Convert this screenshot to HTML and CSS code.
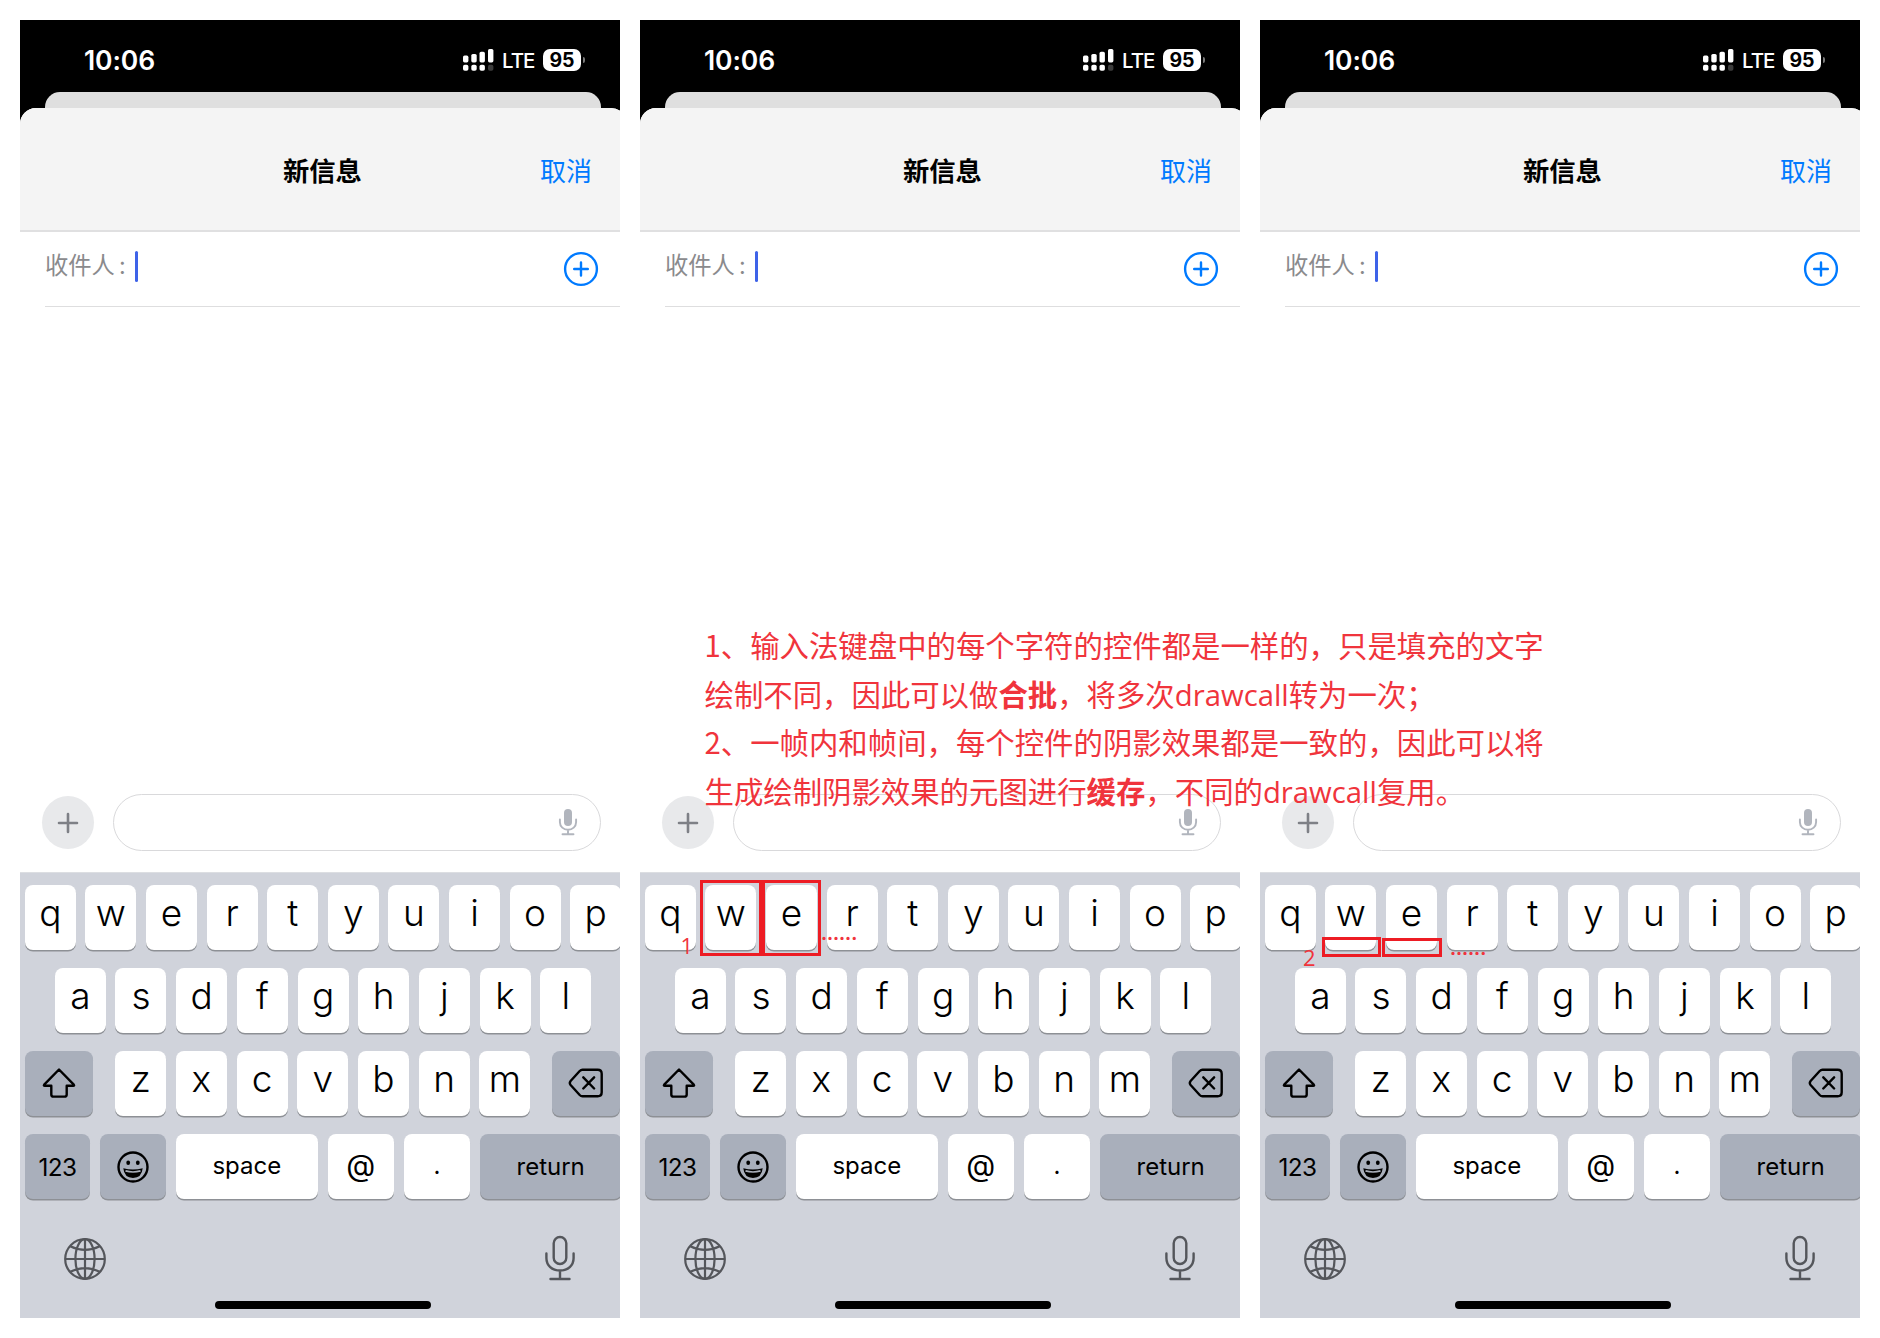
FILE: index.html
```html
<!DOCTYPE html>
<html lang="zh-CN">
<head>
<meta charset="utf-8">
<title>新信息</title>
<link rel="stylesheet" href="styles.css">
</head>
<body>
<main class="board" id="board"></main>

<div class="note">
  <p>1、输入法键盘中的每个字符的控件都是一样的，只是填充的文字</p>
  <p>绘制不同，因此可以做<b>合批</b>，将多次<span class="latin">drawcall</span>转为一次；</p>
  <p>2、一帧内和帧间，每个控件的阴影效果都是一致的，因此可以将</p>
  <p>生成绘制阴影效果的元图进行<b>缓存</b>，不同的<span class="latin">drawcall</span>复用。</p>
</div>
<div class="mark mark-w"></div>
<div class="mark mark-e"></div>
<div class="mark mark-w-shadow"></div>
<div class="mark mark-e-shadow"></div>
<span class="num num-1">1</span>
<span class="num num-2">2</span>
<span class="dots dots-1">······</span>
<span class="dots dots-2">······</span>

<template id="phone">
  <section class="phone">
    <div class="status">
      <span class="time">10:06</span>
      <svg class="signal" width="31" height="22" viewBox="0 0 31 22" fill="#fff">
        <rect x="0" y="6.6" width="5.4" height="6.8" rx="1.6"/><rect x="8.3" y="5" width="5.4" height="8.4" rx="1.6"/><rect x="16.5" y="2.8" width="5.4" height="10.6" rx="1.6"/><rect x="25" y="0" width="5.4" height="13.4" rx="1.6"/>
        <rect x="0" y="15.7" width="5.4" height="6" rx="1.8"/><rect x="8.3" y="15.7" width="5.4" height="6" rx="1.8"/><rect x="16.5" y="15.7" width="5.4" height="6" rx="1.8"/><rect x="25" y="15.7" width="5.4" height="6" rx="1.8" fill="#3c3c3c"/>
      </svg>
      <span class="net">LTE</span>
      <span class="battery">95</span>
      <span class="nub"></span>
    </div>
    <div class="back-sheet"></div>
    <div class="sheet">
      <header class="head"><h1>新信息</h1><a class="cancel">取消</a></header>
      <div class="to">
        <span class="label">收件人<i>:</i></span><span class="caret"></span>
        <svg class="add" width="36" height="36" viewBox="0 0 36 36" fill="none" stroke="#007aff" stroke-width="2.4" stroke-linecap="round"><circle cx="18" cy="18" r="15.9"/><path d="M18 11.4v13.2M11.2 18h13.6"/></svg>
      </div>
      <div class="body"></div>
      <div class="compose">
        <span class="plus"><svg width="22" height="22" viewBox="0 0 22 22" fill="none" stroke="#7e8086" stroke-width="2.6" stroke-linecap="round"><path d="M11 2v18M2 11h18"/></svg></span>
        <div class="field"><svg width="20" height="28" viewBox="0 0 20 28" fill="none" stroke="#b1b5bd" stroke-width="1.9" stroke-linecap="round"><rect x="6" y="1" width="8" height="17" rx="4" fill="#b1b5bd" stroke="none"/><path d="M1.9 11.5v2.8a8.1 7.5 0 0 0 16.2 0v-2.8M10 22v4M4.5 26.2h11"/></svg></div>
      </div>
    </div>
    <div class="keyboard">
      <div class="row r1"></div>
      <div class="row r2"></div>
      <div class="row r3">
        <span class="key dark shift"><svg width="34" height="32" viewBox="0 0 34 32" fill="none" stroke="#000" stroke-width="2.4" stroke-linejoin="round"><path d="M17 2.5 2.2 17.6q-.9 1.2.6 1.2h6.5v8.6q0 2.2 2.2 2.2h11q2.2 0 2.2-2.2v-8.6h6.5q1.5 0 .6-1.2z"/></svg></span>
        <span class="letters"></span>
        <span class="key dark del"><svg width="36" height="30" viewBox="0 0 36 30" fill="none" stroke="#000" stroke-width="2.4" stroke-linecap="round" stroke-linejoin="round"><path d="M14.5 1.8h15.2q4 0 4 4v18.4q0 4-4 4H14.5q-1.6 0-2.8-1.2L2.6 17q-1.600-2 0-4l9.100-10q1.200-1.200 2.800-1.200zM15.300 9.300l10.800 11.200M26.100 9.300 15.300 20.500"/></svg></span>
      </div>
      <div class="row r4">
        <span class="key dark k123">123</span>
        <span class="key dark kemoji"><svg width="34" height="34" viewBox="0 0 34 34" fill="none" stroke="#000" stroke-width="2.4"><circle cx="17" cy="17" r="14.500"/><ellipse cx="12.200" cy="12.800" rx="1.900" ry="2.300" fill="#000" stroke="none"/><ellipse cx="21.800" cy="12.800" rx="1.900" ry="2.300" fill="#000" stroke="none"/><path d="M7.300 18.300q9.700 2.400 19.400 0-1 9.700-9.700 9.700T7.300 18.300z" fill="#000" stroke="none"/><path d="M9.500 20.900q7.500 2.200 15 0" stroke="#a9afbb" stroke-width="1.700"/></svg></span>
        <span class="key kspace">space</span>
        <span class="key kat">@</span>
        <span class="key kdot">.</span>
        <span class="key dark kreturn">return</span>
      </div>
      <div class="tools">
        <svg width="44" height="44" viewBox="0 0 44 44" fill="none" stroke="#54565b" stroke-width="2.200"><circle cx="22" cy="22" r="19.800"/><ellipse cx="22" cy="22" rx="9.600" ry="19.800"/><path d="M22 2.200v39.600M2.200 22h39.600M7.300 9.200q14.700 7.400 29.400 0M7.300 34.800q14.700-7.400 29.400 0"/></svg>
        <svg width="32" height="46" viewBox="0 0 32 46" fill="none" stroke="#54565b" stroke-width="2.400" stroke-linecap="round"><rect x="9.700" y="2" width="12.600" height="27" rx="6.300"/><path d="M2.400 18.500v4.500c0 7.500 5.600 12.500 13.600 12.500s13.600-5 13.600-12.500v-4.500M16 35.500V43.500M6.500 44h19"/></svg>
      </div>
      <div class="home"></div>
    </div>
  </section>
</template>
<script src="app.js"></script>
</body>
</html>
```

FILE: styles.css
```css
* { box-sizing: border-box; }
body { margin: 0; width: 1880px; height: 1338px; overflow: hidden; background: #fff; position: relative; font-family: Inter, "Noto Sans CJK SC", sans-serif; color: #000; }
.board { display: flex; gap: 20px; padding: 20px; }
.phone { width: 600px; height: 1298px; flex: none; overflow: hidden; background: #000; display: flex; flex-direction: column; }
svg { display: block; flex: none; }

.status { height: 72px; flex: none; display: flex; align-items: flex-start; color: #fff; padding: 0 0 0 64px; }
.time { font-size: 26.500px; font-weight: 600; line-height: 32px; margin-top: 24px; width: 379px; letter-spacing: -0.100px; }
.signal { margin-top: 29px; }
.net { margin: 27px 0 0 8px; width: 41px; font-size: 20.500px; font-weight: 500; line-height: 27px; letter-spacing: -1px; }
.battery { margin-top: 29px; width: 38px; height: 22px; border-radius: 7px; background: #fff; color: #000; font-size: 19.500px; line-height: 23px; font-weight: 700; text-align: center; }
.nub { margin: 37px 0 0 2px; width: 2px; height: 6px; background: #777; border-radius: 0 2px 2px 0; }
.back-sheet { height: 16px; flex: none; margin: 0 19px 0 25px; background: #dfdfdf; border-radius: 15px 15px 0 0; }
.sheet { width: 607px; height: 764px; flex: none; background: #fff; border-radius: 16px 16px 0 0; overflow: hidden; display: flex; flex-direction: column; }
.head { height: 124px; flex: none; width: 607px; background: #f4f4f4; border-bottom: 2px solid #e0e0e1; display: grid; grid-template-columns: 263px 257px 1fr; padding-top: 44px; }
.head::before { content: ""; }
.head h1 { margin: 0; font-size: 26.300px; line-height: 40px; font-weight: 700; white-space: nowrap; }
.cancel { color: #007aff; font-size: 26px; line-height: 40px; }
.to { height: 75px; flex: none; margin-left: 25px; border-bottom: 1px solid #dededf; display: flex; }
.label { width: 90px; color: #8a8a8d; font-size: 23.300px; line-height: 34px; margin-top: 17px; white-space: nowrap; }
.label i { font-style: normal; margin-left: 4px; }
.caret { width: 3px; height: 31px; margin-top: 19px; border-radius: 1.500px; background: #3e63e8; }
.add { margin: 19px 0 0 425px; }
.body { flex: 1; }
.compose { height: 79px; flex: none; display: flex; padding-left: 22px; }
.plus { width: 52px; height: 53px; margin-top: 3px; border-radius: 50%; background: #e8e9eb; display: grid; place-items: center; }
.field { width: 488px; height: 57px; margin: 1px 0 0 19px; border: 1.500px solid #d9d9db; border-radius: 28.500px; display: flex; align-items: center; justify-content: flex-end; padding: 0 22px 1px 0; }

.keyboard { width: 607px; flex: 1; background: #d0d3db; border-top: 1px solid #dcdee2; padding: 12px 0 0 4.800px; display: flex; flex-direction: column; gap: 18.600px; }
.row, .letters { display: flex; gap: 9.600px; height: 64.500px; flex: none; }
.r2 { padding-left: 30px; }
.r2, .letters { gap: 9.700px; }
.r3 { gap: 22px; }
.r4 { gap: 9.800px; }
.key { width: 51px; height: 64.500px; flex: none; background: #fff; border-radius: 8px; box-shadow: 0 1.500px 0 #8d9095; display: flex; align-items: center; justify-content: center; font-size: 37px; font-weight: 350; padding-bottom: 9px; }
.dark { background: #a9afbb; padding-bottom: 0; }
.shift { width: 68.400px; }
.del { width: 68px; }
.k123 { width: 65.400px; font-size: 24.300px; font-weight: 400; letter-spacing: -0.500px; }
.kemoji { width: 66px; }
.kspace { width: 142px; font-size: 24px; font-weight: 400; padding-bottom: 3px; }
.kat { width: 66.500px; font-size: 30px; font-weight: 400; padding-bottom: 4px; }
.kdot { width: 66px; font-size: 24px; font-weight: 400; padding-bottom: 3px; }
.kreturn { width: 142px; font-size: 24px; font-weight: 400; }
.tools { display: flex; justify-content: space-between; padding: 20px 51px 0 38.500px; height: 66px; flex: none; }
.tools svg:last-child { margin-top: -2px; }
.home { width: 216px; height: 8px; border-radius: 4px; background: #000; margin: -0.600px 0 0 190px; flex: none; }

/* Annotations drawn across the phones */
.note { position: absolute; left: 704.500px; top: 620px; color: #f0343c; font-size: 29.400px; }
.note p { margin: 0; height: 48.700px; line-height: 48.700px; white-space: nowrap; font-family: "Noto Sans CJK SC", sans-serif; }
.latin { font-family: "Open Sans", sans-serif; font-size: 29.300px; }
.mark { position: absolute; border: 3px solid #ed1c24; }
.mark-w { left: 700px; top: 880px; width: 62px; height: 76px; }
.mark-e { left: 762px; top: 880px; width: 59px; height: 76px; }
.mark-w-shadow { left: 1322px; top: 937px; width: 59px; height: 20px; }
.mark-e-shadow { left: 1382px; top: 938px; width: 60px; height: 19px; }
.num, .dots { position: absolute; color: #f0343c; font-family: "Open Sans", sans-serif; line-height: 24px; }
.num { font-size: 22px; font-weight: 400; }
.num-1 { left: 680.500px; top: 933px; }
.num-2 { left: 1303px; top: 945px; }
.dots { font-size: 22px; font-weight: 600; }
.dots-1 { left: 821px; top: 925px; }
.dots-2 { left: 1450px; top: 940px; }
```

FILE: app.js
```js
const board = document.getElementById('board');
const template = document.getElementById('phone');
const rows = { '.r1': 'qwertyuiop', '.r2': 'asdfghjkl', '.letters': 'zxcvbnm' };

for (let i = 0; i < 3; i++) {
  const phone = template.content.cloneNode(true);
  for (const [selector, letters] of Object.entries(rows)) {
    const row = phone.querySelector(selector);
    for (const letter of letters) {
      const key = document.createElement('span');
      key.className = 'key';
      key.textContent = letter;
      row.append(key);
    }
  }
  board.append(phone);
}
```
